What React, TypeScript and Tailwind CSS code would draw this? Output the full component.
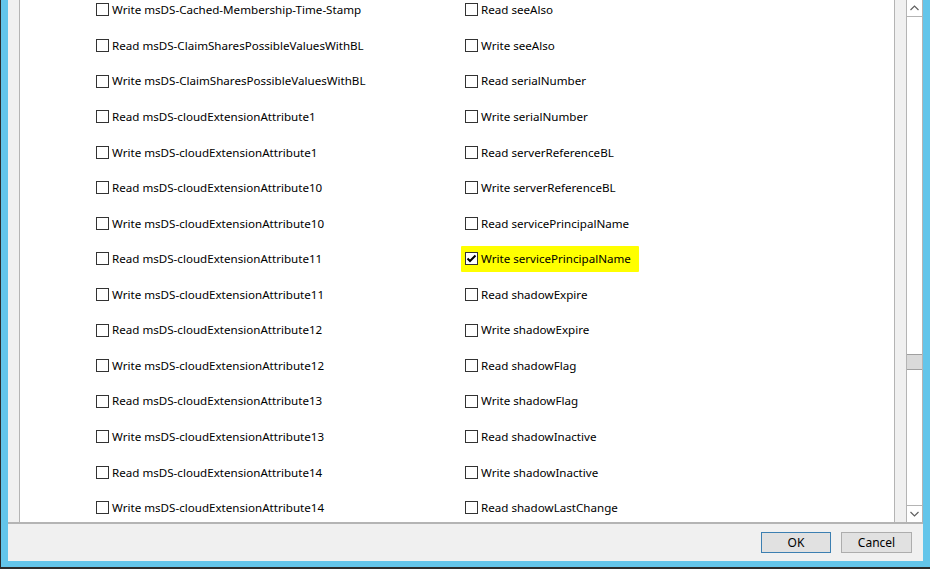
import React from "react";

const left = [
  "Write msDS-Cached-Membership-Time-Stamp",
  "Read msDS-ClaimSharesPossibleValuesWithBL",
  "Write msDS-ClaimSharesPossibleValuesWithBL",
  "Read msDS-cloudExtensionAttribute1",
  "Write msDS-cloudExtensionAttribute1",
  "Read msDS-cloudExtensionAttribute10",
  "Write msDS-cloudExtensionAttribute10",
  "Read msDS-cloudExtensionAttribute11",
  "Write msDS-cloudExtensionAttribute11",
  "Read msDS-cloudExtensionAttribute12",
  "Write msDS-cloudExtensionAttribute12",
  "Read msDS-cloudExtensionAttribute13",
  "Write msDS-cloudExtensionAttribute13",
  "Read msDS-cloudExtensionAttribute14",
  "Write msDS-cloudExtensionAttribute14",
];

const right = [
  "Read seeAlso",
  "Write seeAlso",
  "Read serialNumber",
  "Write serialNumber",
  "Read serverReferenceBL",
  "Write serverReferenceBL",
  "Read servicePrincipalName",
  "Write servicePrincipalName",
  "Read shadowExpire",
  "Write shadowExpire",
  "Read shadowFlag",
  "Write shadowFlag",
  "Read shadowInactive",
  "Write shadowInactive",
  "Read shadowLastChange",
];

function Box({ checked }: { checked?: boolean }) {
  return (
    <span className="flex h-[13px] w-[13px] shrink-0 items-center justify-center border border-[#333333] bg-white">
      {checked && (
        <svg width="11" height="11" viewBox="0 0 11 11">
          <path d="M1.5 5.5 L4 8 L9.5 2.5" fill="none" stroke="#000" strokeWidth="2" />
        </svg>
      )}
    </span>
  );
}

function Item({ label, checked }: { label: string; checked?: boolean }) {
  if (checked) {
    return (
      <div className="flex h-[35.57px] items-center">
        <span className="-ml-[4px] flex items-center gap-[3px] rounded-[1px] bg-[#ffff00] py-[4px] pr-[8px] pl-[4px]">
          <Box checked />
          <span className="whitespace-nowrap">{label}</span>
        </span>
      </div>
    );
  }
  return (
    <div className="flex h-[35.57px] items-center gap-[3px]">
      <Box />
      <span className="whitespace-nowrap">{label}</span>
    </div>
  );
}

export default function App() {
  return (
    <div
      className="flex h-[569px] w-[930px] flex-col overflow-hidden border-b-2 border-l border-[#2b2b2b] bg-[#63c5ea] pr-[7px] pb-[6px] pl-[7px] text-[11.6px] text-black"
      style={{ fontFamily: '"Noto Sans", "Open Sans", sans-serif' }}
    >
      <div className="flex min-h-0 flex-1 flex-col bg-[#f0f0f0]">
        {/* list area */}
        <div className="flex min-h-0 flex-1">
          <div className="w-[11px] shrink-0" />
          <div className="min-w-0 flex-1 overflow-hidden border-x border-[#b4b4b4] bg-white">
            <div className="-mt-[7.8px] grid grid-cols-[369px_1fr] pl-[76px]">
              <div>
                {left.map((l) => (
                  <Item key={l} label={l} />
                ))}
              </div>
              <div>
                {right.map((r) => (
                  <Item key={r} label={r} checked={r === "Write servicePrincipalName"} />
                ))}
              </div>
            </div>
          </div>
          <div className="w-[11px] shrink-0" />
          {/* scrollbar */}
          <div className="flex w-[17px] shrink-0 flex-col border-x border-[#b4b4b4] bg-white">
            <div className="flex h-[17px] items-center justify-center border-b border-[#b4b4b4]">
              <svg width="9" height="6" viewBox="0 0 9 6">
                <path d="M0.5 5 L4.5 1 L8.5 5" fill="none" stroke="#606060" strokeWidth="1.2" />
              </svg>
            </div>
            <div className="h-[337px]" />
            <div className="h-[16px] border-y border-[#a0a0a0] bg-[#dadada]" />
            <div className="flex-1" />
            <div className="flex h-[17px] items-center justify-center border-t border-[#b4b4b4]">
              <svg width="9" height="6" viewBox="0 0 9 6">
                <path d="M0.5 1 L4.5 5 L8.5 1" fill="none" stroke="#606060" strokeWidth="1.2" />
              </svg>
            </div>
          </div>
        </div>
        {/* button bar */}
        <div className="flex h-[39px] shrink-0 items-center justify-end gap-[10px] border-t-2 border-[#b4b4b4] pr-[11px]">
          <button className="h-[21px] w-[70px] border border-[#3c7fb1] bg-[#e1e1e1] text-[12px] leading-none">
            OK
          </button>
          <button className="h-[21px] w-[71px] border border-[#adadad] bg-[#e1e1e1] text-[12px] leading-none">
            Cancel
          </button>
        </div>
      </div>
    </div>
  );
}
